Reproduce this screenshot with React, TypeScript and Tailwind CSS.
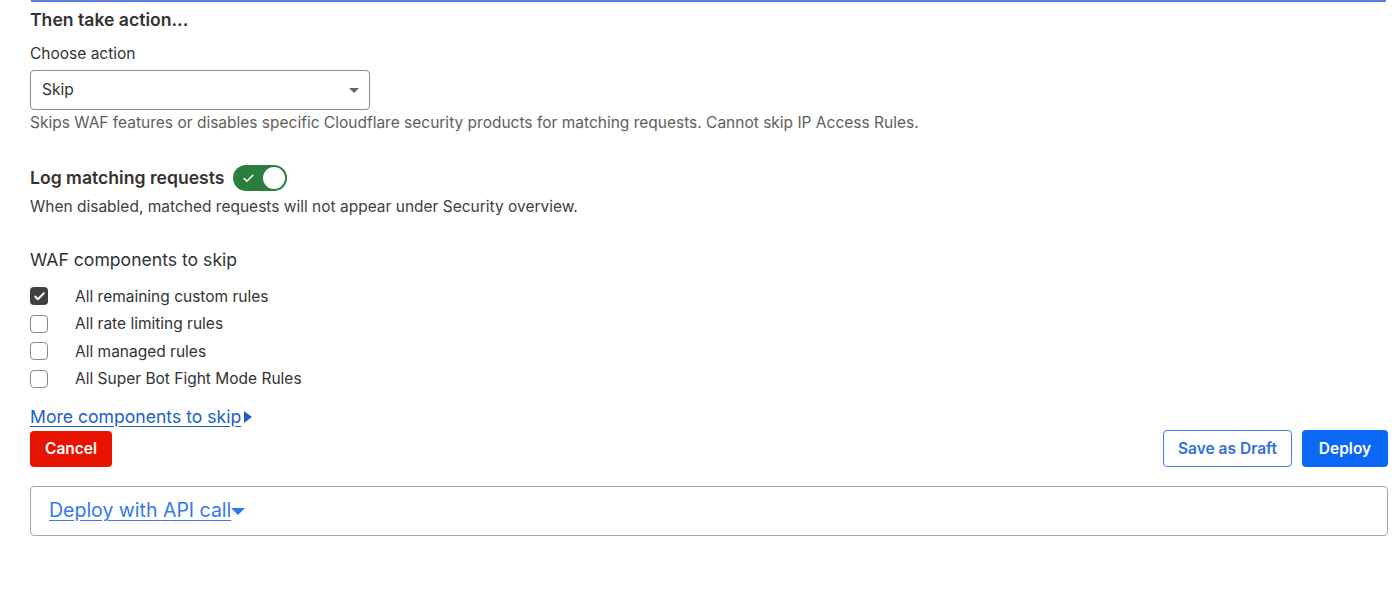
import { Check } from "lucide-react"

const rules = [
  { label: "All remaining custom rules", checked: true },
  { label: "All rate limiting rules", checked: false },
  { label: "All managed rules", checked: false },
  { label: "All Super Bot Fight Mode Rules", checked: false },
]

const CheckBox = ({ checked }: { checked: boolean }) =>
  checked ? (
    <span className="w-[18px] h-[18px] rounded-[4px] bg-[#404040] flex items-center justify-center">
      <Check className="w-[13px] h-[13px] text-white" strokeWidth={3.5} />
    </span>
  ) : (
    <span className="w-[18px] h-[18px] rounded-[4px] border-[1.5px] border-[#8a8a8a] bg-white" />
  )

const App = () => {
  return (
    <div
      className="w-[1400px] h-[614px] bg-white text-[#313131] overflow-hidden"
      style={{ fontFamily: "Inter, 'Noto Sans', sans-serif" }}
    >
      {/* bottom edge of the panel above */}
      <div className="ml-[31px] mr-[14px] h-[2px] bg-[#5a7fe6]" />

      <div className="pl-[30px] pr-[12px]">
        <h3 className="mt-[8px] text-[17.6px] font-semibold leading-[20px] text-[#333]">Then take action...</h3>

        <label className="block mt-[15px] text-[15.5px] leading-[18px] text-[#333]">Choose action</label>
        <div className="mt-[7px] w-[340px] h-[40px] border border-[#8c8c8c] rounded-[4px] flex items-center justify-between pl-[11px] pr-[10px]">
          <span className="text-[15.5px] text-[#333]">Skip</span>
          <span className="w-0 h-0 border-l-[5px] border-r-[5px] border-t-[5px] border-l-transparent border-r-transparent border-t-[#666]" />
        </div>
        <p className="mt-[4px] text-[15.5px] leading-[18px] text-[#5e5e5e]">
          Skips WAF features or disables specific Cloudflare security products for matching requests. Cannot skip IP Access Rules.
        </p>

        <div className="mt-[33px] flex items-center gap-[9px] h-[26px]">
          <span className="text-[17.6px] font-semibold text-[#333]">Log matching requests</span>
          <span className="w-[54px] h-[26px] rounded-full bg-[#2a7f3f] flex items-center justify-between pl-[9px] pr-[2px]">
            <Check className="w-[13px] h-[13px] text-white" strokeWidth={3} />
            <span className="w-[22px] h-[22px] rounded-full bg-white" />
          </span>
        </div>
        <p className="mt-[7px] text-[15.5px] leading-[18px] text-[#404040]">
          When disabled, matched requests will not appear under Security overview.
        </p>

        <h4 className="mt-[33px] text-[17.6px] leading-[22px] text-[#333]">WAF components to skip</h4>

        <div className="mt-[16px] flex flex-col gap-[9px]">
          {rules.map((r) => (
            <div key={r.label} className="flex items-center h-[18.5px]">
              <CheckBox checked={r.checked} />
              <span className="ml-[27px] text-[15.5px] text-[#333]">{r.label}</span>
            </div>
          ))}
        </div>

        <a className="mt-[18px] inline-flex items-center text-[17.6px] leading-[22px] text-[#2160c4] underline decoration-[#2160c4] underline-offset-[3px]">
          More components to skip
          <span className="ml-[3px] w-0 h-0 border-t-[6.5px] border-b-[6.5px] border-l-[8px] border-t-transparent border-b-transparent border-l-[#1f5fcc]" />
        </a>

        <div className="mt-[1px] flex items-center justify-between">
          <button className="w-[82px] h-[36px] rounded-[4px] bg-[#e81403] text-white text-[15.5px] font-semibold">Cancel</button>
          <div className="flex gap-[10px]">
            <button className="w-[129px] h-[37px] rounded-[4px] border border-[#3d80ec] text-[#2f6fd9] text-[15.5px] font-semibold">
              Save as Draft
            </button>
            <button className="w-[86px] h-[37px] rounded-[4px] bg-[#0a68f5] text-white text-[15.5px] font-semibold">Deploy</button>
          </div>
        </div>

        <div className="mt-[19px] h-[50px] border border-[#a6a6a6] rounded-[4px] flex items-center pl-[18px]">
          <a className="inline-flex items-center text-[19.5px] text-[#3677ef] underline underline-offset-[3px]">
            Deploy with API call
            <span className="w-0 h-0 border-l-[7px] border-r-[7px] border-t-[7px] border-l-transparent border-r-transparent border-t-[#3677ef]" />
          </a>
        </div>
      </div>
    </div>
  )
}

export default App
